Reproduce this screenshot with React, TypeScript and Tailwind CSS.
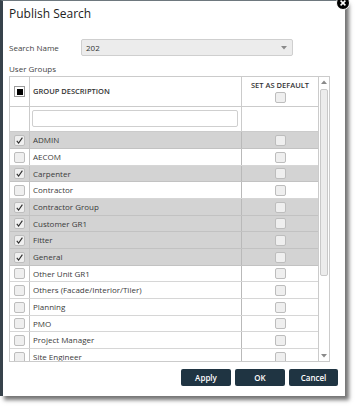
import React from "react";

const groups = [
  { name: "ADMIN", checked: true },
  { name: "AECOM", checked: false },
  { name: "Carpenter", checked: true },
  { name: "Contractor", checked: false },
  { name: "Contractor Group", checked: true },
  { name: "Customer GR1", checked: true },
  { name: "Fitter", checked: true },
  { name: "General", checked: true },
  { name: "Other Unit GR1", checked: false },
  { name: "Others (Facade/Interior/Tiler)", checked: false },
  { name: "Planning", checked: false },
  { name: "PMO", checked: false },
  { name: "Project Manager", checked: false },
  { name: "Site Engineer", checked: false },
];

const CheckBox = ({ checked = false }: { checked?: boolean }) => (
  <div className="w-[11px] h-[11px] rounded-[2px] border border-[#bdbdbd] bg-[#efefef] flex items-center justify-center">
    {checked && (
      <svg width="9" height="9" viewBox="0 0 9 9">
        <path d="M1.8 4.9 L3.6 7 L7.4 1.6" fill="none" stroke="#2d2d2d" strokeWidth="1.1" />
      </svg>
    )}
  </div>
);

export default function App() {
  return (
    <div
      className="w-[359px] h-[409px] bg-white overflow-hidden"
      style={{ fontFamily: '"Open Sans", "Liberation Sans", sans-serif' }}
    >
      <div className="relative w-[345px] h-[396px] bg-white border-l-[3px] border-l-[#37424b] border-t border-t-[#6e787e] shadow-[4px_4px_4px_rgba(0,0,0,0.55)] pl-[6px]">
        {/* close button */}
        <svg className="absolute left-[333px] top-[-5px]" width="14" height="14" viewBox="0 0 14 14">
          <circle cx="7" cy="7" r="6.5" fill="#000" stroke="#fff" strokeWidth="1" />
          <path d="M4.6 4.6 L9.4 9.4 M9.4 4.6 L4.6 9.4" stroke="#fff" strokeWidth="1.5" />
        </svg>

        {/* Title */}
        <div className="mt-[5px] leading-[16px] text-[12px] font-medium text-[#222]">Publish Search</div>

        {/* Search name */}
        <div className="mt-[17px] flex items-center h-[17px]">
          <span className="w-[72px] text-[8px] text-[#444]">Search Name</span>
          <div className="w-[212px] h-[17px] rounded-[2px] border border-[#cfcfcf] bg-[#ececec] flex items-center justify-between pl-[4px] pr-[5px]">
            <span className="text-[8px] text-[#333]">202</span>
            <svg width="6" height="4" viewBox="0 0 6 4">
              <path d="M0 0 L6 0 L3 3.5 Z" fill="#8a8a8a" />
            </svg>
          </div>
        </div>

        {/* User groups */}
        <div className="mt-[7px] leading-[12px] text-[8px] text-[#444]">User Groups</div>

        <div className="mt-[1px] w-[321px] h-[286px] border border-[#cbcbcb] flex">
          <div className="w-[308px] overflow-hidden">
            {/* header */}
            <div className="flex h-[30px] border-b border-[#cbcbcb]">
              <div className="w-[20px] border-r border-[#cbcbcb] flex items-center justify-center">
                <div className="w-[11px] h-[11px] border border-[#9a9a9a] bg-white flex items-center justify-center">
                  <div className="w-[6px] h-[6px] bg-black" />
                </div>
              </div>
              <div className="w-[212px] border-r border-[#cbcbcb] flex items-center pl-[3px] text-[7.5px] font-semibold text-[#333]">
                GROUP DESCRIPTION
              </div>
              <div className="w-[76px] flex flex-col items-center pt-[3px] gap-[2px]">
                <span className="text-[7.5px] leading-[10px] font-semibold text-[#333]">SET AS DEFAULT</span>
                <CheckBox />
              </div>
            </div>

            {/* filter */}
            <div className="flex h-[25px] border-b border-[#cbcbcb]">
              <div className="w-[20px] border-r border-[#cbcbcb]" />
              <div className="w-[212px] border-r border-[#cbcbcb] pl-[2px] pr-[3px] pt-[3px]">
                <div className="h-[17px] rounded-[2px] border border-[#cfcfcf] bg-white" />
              </div>
              <div className="w-[76px]" />
            </div>

            {/* rows */}
            {groups.map((g, i) => (
              <div
                key={g.name}
                className={`flex border-b ${i % 3 === 2 ? "h-[16px]" : "h-[17px]"} ${
                  g.checked ? "bg-[#d3d3d3] border-[#c2c2c2]" : "bg-white border-[#d6d6d6]"
                }`}
              >
                <div className="w-[20px] border-r border-[#c4c4c4] flex items-center justify-center">
                  <CheckBox checked={g.checked} />
                </div>
                <div className="w-[212px] border-r border-[#b9b9b9] flex items-center pl-[3px] text-[8px] text-[#3a3a3a]">
                  {g.name}
                </div>
                <div className="w-[76px] flex items-center justify-center">
                  <CheckBox />
                </div>
              </div>
            ))}
          </div>

          {/* scrollbar */}
          <div className="flex-1 border-l border-[#cbcbcb] flex flex-col items-center pt-[3px] pb-[3px]">
            <svg width="6" height="4" viewBox="0 0 6 4">
              <path d="M0 4 L6 4 L3 0.5 Z" fill="#8a8a8a" />
            </svg>
            <div className="mt-[5px] w-[8px] h-[187px] rounded-[2px] border border-[#c8c8c8] bg-[#ececec]" />
            <div className="flex-1" />
            <svg width="6" height="4" viewBox="0 0 6 4">
              <path d="M0 0 L6 0 L3 3.5 Z" fill="#8a8a8a" />
            </svg>
          </div>
        </div>

        {/* buttons */}
        <div className="mt-[7px] flex justify-end gap-[4px] pr-[7px]">
          <button className="w-[50px] h-[17px] rounded-[2px] bg-[#1f3442] text-white text-[8px] font-semibold">Apply</button>
          <button className="w-[50px] h-[17px] rounded-[2px] bg-[#1f3442] text-white text-[8px] font-semibold">OK</button>
          <button className="w-[49px] h-[17px] rounded-[2px] bg-[#1f3442] text-white text-[8px] font-semibold">Cancel</button>
        </div>
      </div>
    </div>
  );
}
